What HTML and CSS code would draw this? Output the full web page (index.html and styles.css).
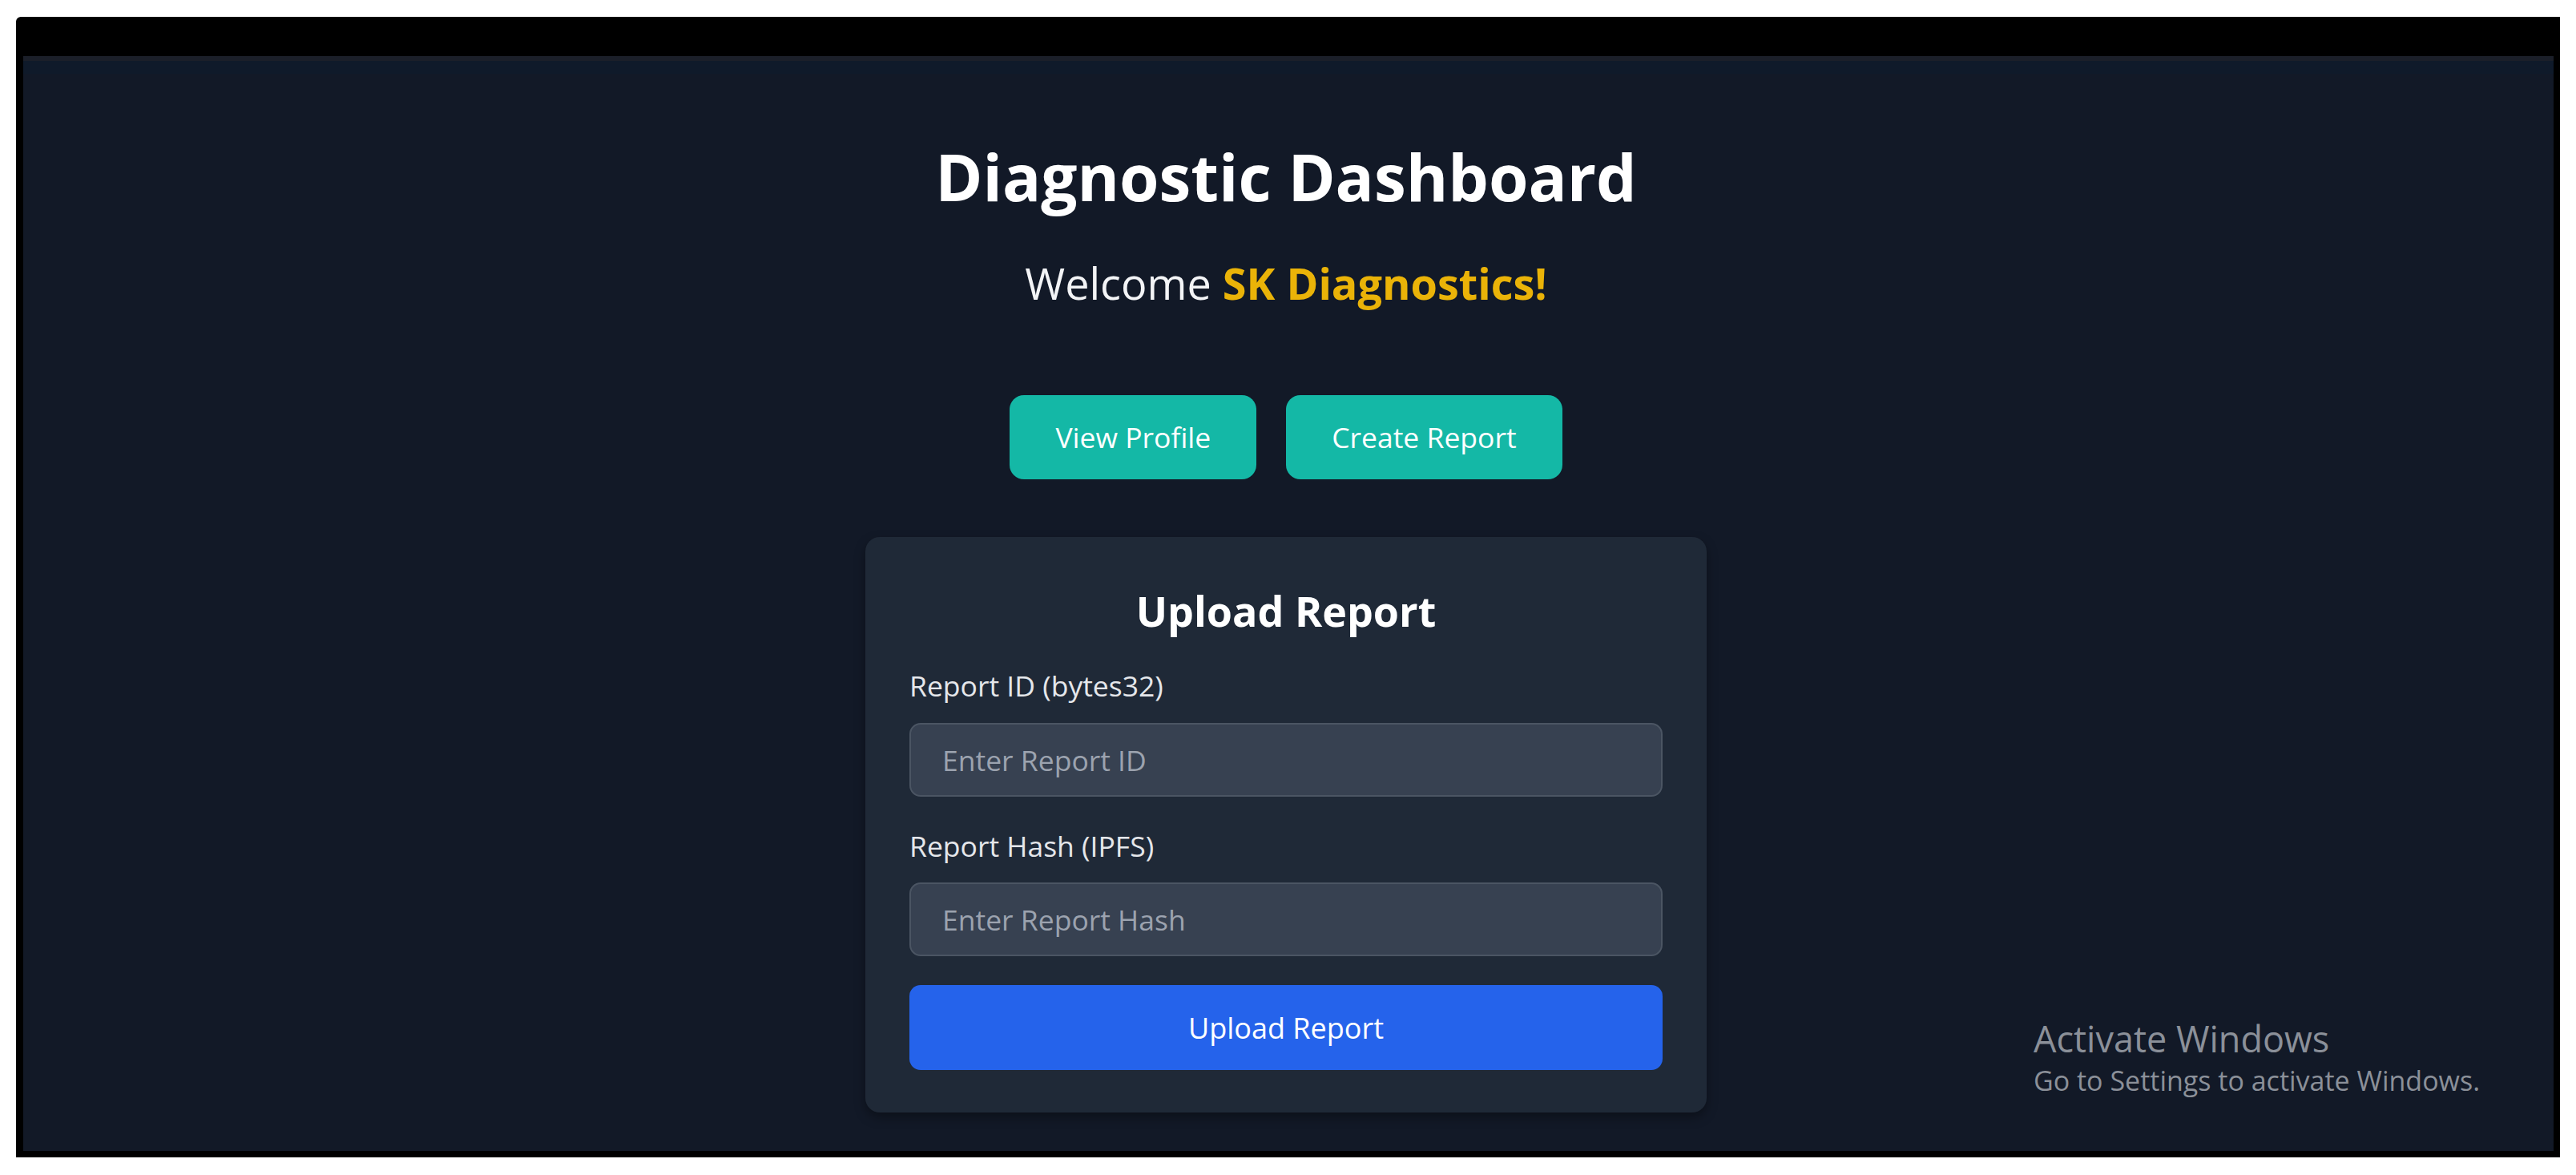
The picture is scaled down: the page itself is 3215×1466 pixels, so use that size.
FILE: index.html
```html
<!DOCTYPE html>
<html lang="en">
<head>
    <meta charset="UTF-8">
    <meta name="viewport" content="width=device-width, initial-scale=1.0">
    <title>Diagnostic Dashboard</title>
    <link rel="stylesheet" href="styles.css">
</head>
<body>
    <div class="frame">
        <div class="screen">
            <h1>Diagnostic Dashboard</h1>
            <p class="welcome">Welcome <span class="lab-name">SK Diagnostics!</span></p>

            <div class="actions">
                <button class="btn-teal">View Profile</button>
                <button class="btn-teal">Create Report</button>
            </div>

            <div class="card">
                <h2>Upload Report</h2>
                <div class="field">
                    <label for="report-id">Report ID (bytes32)</label>
                    <input type="text" id="report-id" placeholder="Enter Report ID">
                </div>
                <div class="field">
                    <label for="report-hash">Report Hash (IPFS)</label>
                    <input type="text" id="report-hash" placeholder="Enter Report Hash">
                </div>
                <button class="btn-upload">Upload Report</button>
            </div>

            <div class="watermark">
                <div class="wm-title">Activate Windows</div>
                <div class="wm-sub">Go to Settings to activate Windows.</div>
            </div>
        </div>
    </div>
</body>
</html>
```

FILE: styles.css
```css
* {
    box-sizing: border-box;
}

body {
    margin: 0;
    padding: 21px 20px 22px 20px;
    height: 100vh;
    background-color: #fff;
    font-family: 'Open Sans', 'Noto Sans', sans-serif;
}

.frame {
    height: 100%;
    background-color: #000;
    border-radius: 6px 0 0 0;
    padding: 49px 8px 8px 9px;
}

.screen {
    position: relative;
    height: 100%;
    background: linear-gradient(#1b1f29 0, #1b1f29 6px, #0f1a2a 6px, #0f1a2a 22px, #121927 22px);
    background-color: #121927;
    display: flex;
    flex-direction: column;
    align-items: center;
    padding-top: 102px;
    padding-right: 6px;
    color: #fff;
}

h1 {
    margin: 0;
    font-size: 80px;
    font-weight: 700;
    line-height: 1.2;
    color: #fff;
}

.welcome {
    margin: 45px 0 0 0;
    font-size: 54px;
    line-height: 1.5;
    color: #f3f4f6;
}

.lab-name {
    font-weight: 700;
    color: #eab308;
}

.actions {
    display: flex;
    gap: 37px;
    margin-top: 99px;
}

.btn-teal {
    font-family: inherit;
    font-size: 35.5px;
    line-height: 1.5;
    padding: 26px 57px;
    background-color: #14b8a6;
    color: #fff;
    border: none;
    border-radius: 18px;
    cursor: pointer;
}

.card {
    margin-top: 72px;
    width: 1050px;
    background-color: #1f2937;
    border-radius: 18px;
    padding: 53px 55px 53px 55px;
    box-shadow: 0 6px 14px rgba(0, 0, 0, 0.35);
}

.card h2 {
    margin: 0 0 29px 0;
    text-align: center;
    font-size: 52px;
    font-weight: 700;
    line-height: 1.5;
    color: #fff;
}

.field {
    display: flex;
    flex-direction: column;
    margin-bottom: 36px;
}

.field label {
    font-size: 35.5px;
    line-height: 1.45;
    color: #e5e7eb;
    margin-bottom: 20px;
}

.field input {
    height: 92px;
    padding: 0 39px;
    font-family: inherit;
    font-size: 35.5px;
    color: #fff;
    background-color: #374151;
    border: 2px solid #4b5563;
    border-radius: 14px;
    outline: none;
}

.field input::placeholder {
    color: #9ca3af;
}

.btn-upload {
    display: block;
    width: 100%;
    height: 106px;
    font-family: inherit;
    font-size: 36px;
    background-color: #2563eb;
    color: #fff;
    border: none;
    border-radius: 14px;
    cursor: pointer;
}

.watermark {
    position: absolute;
    left: 2509px;
    top: 1199px;
    color: #8b9099;
}

.wm-title {
    font-size: 45px;
    line-height: 1.2;
}

.wm-sub {
    margin-top: 2px;
    font-size: 34px;
    line-height: 1.4;
}
```
